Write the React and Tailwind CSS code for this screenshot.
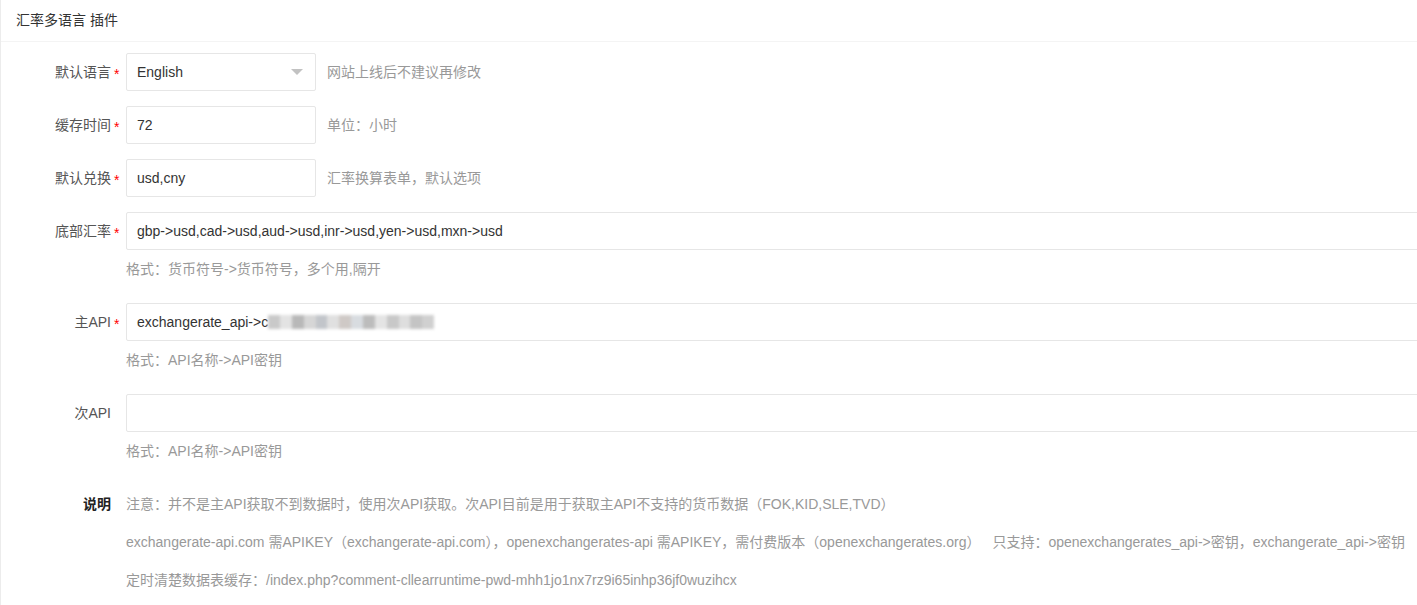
const FONT = "font-['Liberation_Sans','Noto_Sans_CJK_SC',sans-serif]";

const Label = ({ text, required, strong }) => (
  <div className="flex w-[125px] shrink-0 h-[38px] items-center">
    <span className={`w-[110px] text-right text-[14px] ${strong ? 'text-[#222] font-bold' : 'text-[#555]'}`}>
      {text}
    </span>
    {required && <span className="ml-[3px] text-[14px] text-[#ff0000] leading-none mt-[3px]">*</span>}
  </div>
);

const Help = ({ children }) => (
  <div className="pl-[125px] py-[9px] leading-[20px] text-[14px] text-[#999]">{children}</div>
);

const Input = ({ value, wide, children }) => (
  <div
    className={`h-[38px] border border-[#e6e6e6] rounded-[2px] bg-white flex items-center pl-[10px] text-[14px] text-[#333] ${wide ? 'w-[1320px]' : 'w-[190px]'}`}
  >
    {value}
    {children}
  </div>
);

const Row = ({ label, required, value, wide, aside, children, help }) => (
  <div className="mb-[15px]">
    <div className="flex items-center">
      <Label text={label} required={required} />
      {children || <Input value={value} wide={wide} />}
      {aside && <span className="ml-[11px] text-[14px] text-[#999]">{aside}</span>}
    </div>
    {help && <Help>{help}</Help>}
  </div>
);

const Blurred = () => (
  <span className="flex h-[14px] w-[166px] overflow-hidden blur-[1.5px]">
    {['#c9c9c9', '#e3e3e3', '#b8b8b8', '#d6d6d6', '#c2c5ca', '#e0e0e0', '#cfc9c6', '#d8dce0', '#bcbcbc', '#e4e4e4', '#c8c8c8', '#dedede', '#c4c4c4', '#d0d0d0'].map((c, i) => (
      <span key={i} className="flex-1" style={{ backgroundColor: c }} />
    ))}
  </span>
);

export default function App() {
  return (
    <div className={`w-full h-[605px] overflow-hidden bg-white ${FONT}`}>
      <div className="w-[1440px] border-l border-[#ececec] min-h-[605px]">
        <div className="h-[42px] border-b border-[#f4f4f4] flex items-center pl-[15px] text-[14px] text-[#333]">
          汇率多语言 插件
        </div>

        <div className="pt-[11px]">
          <Row label="默认语言" required aside="网站上线后不建议再修改">
            <div className="h-[38px] w-[190px] border border-[#e6e6e6] rounded-[2px] bg-white flex items-center justify-between pl-[10px] pr-[12px] text-[14px] text-[#333]">
              English
              <span className="w-0 h-0 border-l-[6px] border-r-[6px] border-t-[6px] border-l-transparent border-r-transparent border-t-[#c2c2c2]" />
            </div>
          </Row>
          <Row label="缓存时间" required value="72" aside="单位：小时" />
          <Row label="默认兑换" required value="usd,cny" aside="汇率换算表单，默认选项" />
          <Row
            label="底部汇率"
            required
            wide
            value="gbp->usd,cad->usd,aud->usd,inr->usd,yen->usd,mxn->usd"
            help="格式：货币符号->货币符号，多个用,隔开"
          />
          <Row label="主API" required help="格式：API名称->API密钥">
            <Input wide value="exchangerate_api->c">
              <Blurred />
            </Input>
          </Row>
          <Row label="次API" wide value="" help="格式：API名称->API密钥" />

          <div className="flex">
            <div className="flex w-[125px] shrink-0 h-[38px] items-center">
              <span className="w-[110px] text-right text-[14px] text-[#222] font-bold">说明</span>
            </div>
            <div className="text-[14px] text-[#999] leading-[20px]">
              <div className="py-[9px]">注意：并不是主API获取不到数据时，使用次API获取。次API目前是用于获取主API不支持的货币数据（FOK,KID,SLE,TVD）</div>
              <div className="py-[9px]">
                exchangerate-api.com 需APIKEY（exchangerate-api.com），openexchangerates-api 需APIKEY，需付费版本（openexchangerates.org）
                <span className="ml-[12px]">只支持：openexchangerates_api-&gt;密钥，exchangerate_api-&gt;密钥</span>
              </div>
              <div className="py-[9px]">定时清楚数据表缓存：/index.php?comment-cllearruntime-pwd-mhh1jo1nx7rz9i65inhp36jf0wuzihcx</div>
            </div>
          </div>
        </div>
      </div>
    </div>
  );
}
